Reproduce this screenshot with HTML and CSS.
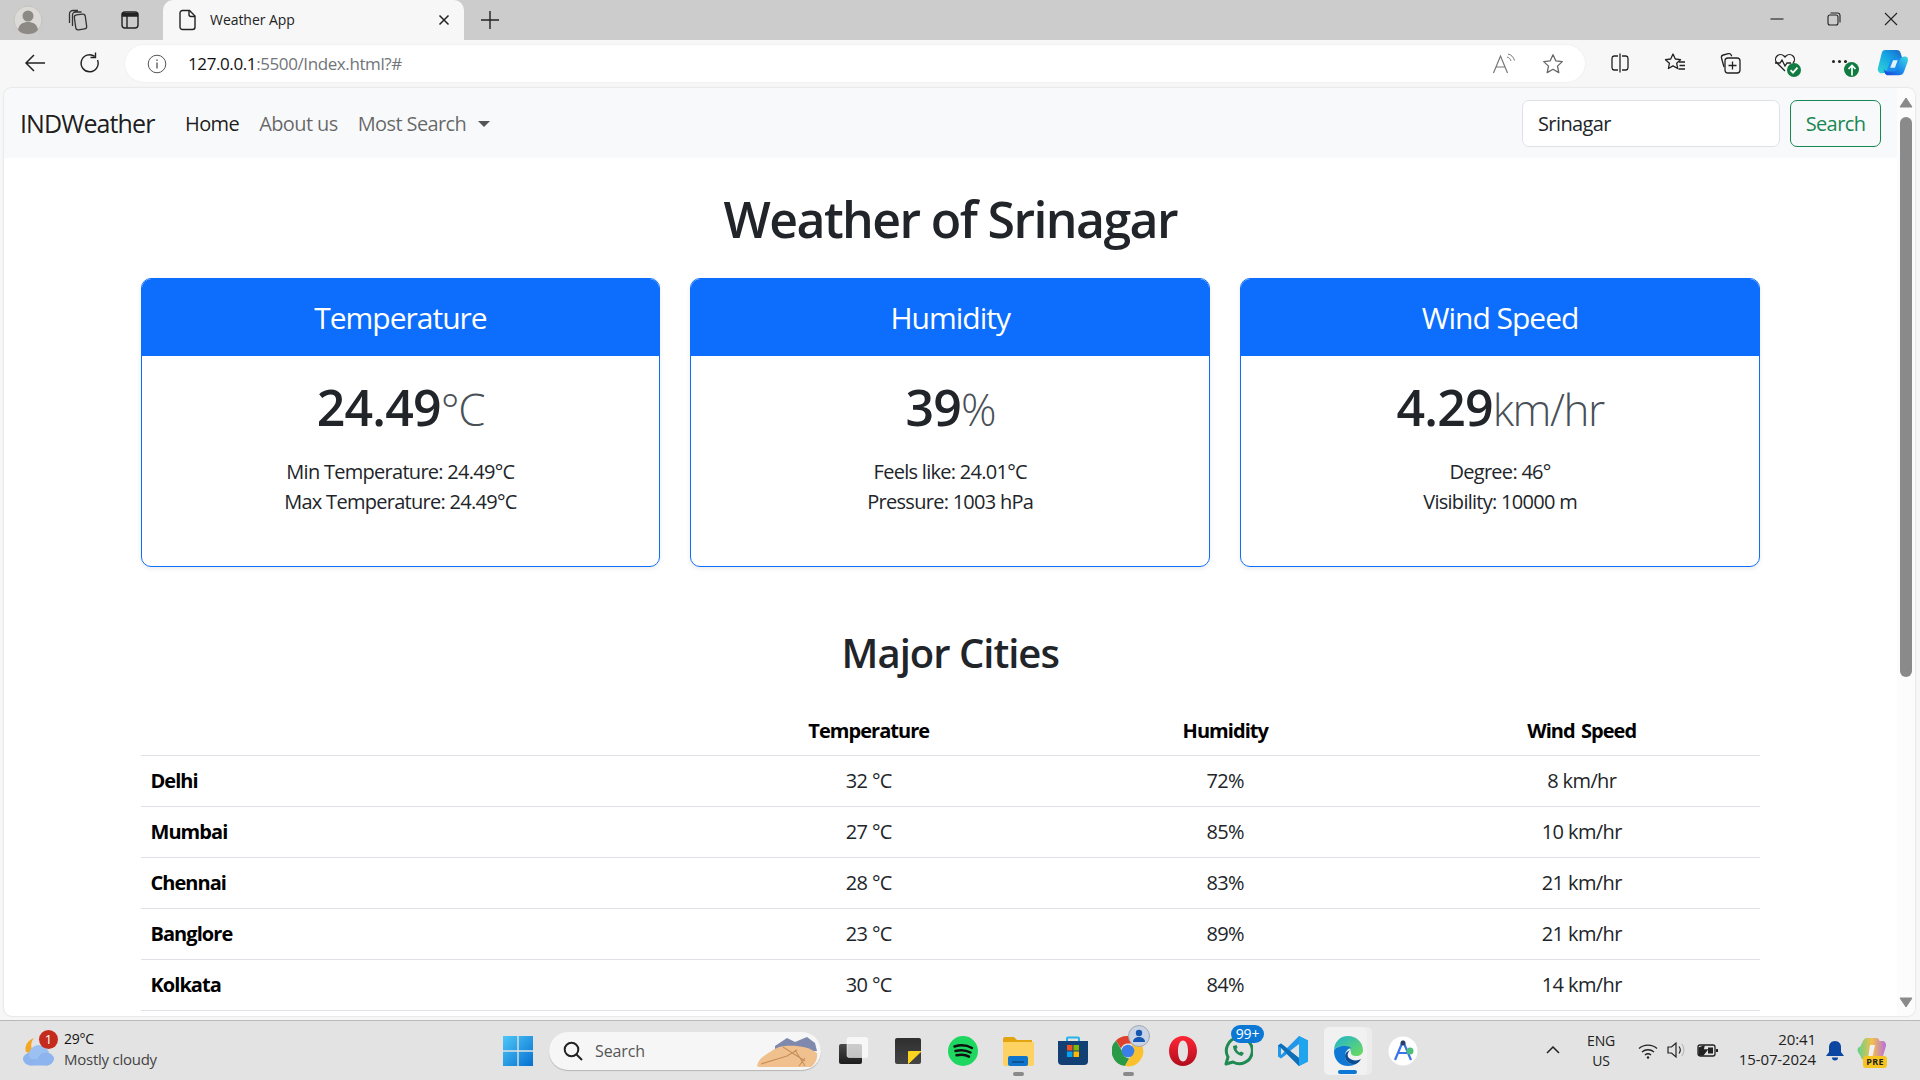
FILE: index.html
```html
<!DOCTYPE html>
<html lang="en">
<head>
<meta charset="utf-8">
<title>Weather App</title>
<link rel="stylesheet" href="styles.css">
</head>
<body>
<div class="tabstrip">
  <div class="slot profile-slot"><svg width="30" height="30" viewBox="0 0 30 30"><circle cx="15" cy="15" r="14" fill="#dcdad6" stroke="#c4c2be"/><circle cx="15" cy="11" r="5.5" fill="#8d8a85"/><path d="M5 25c1-6 5-8 10-8s9 2 10 8c-3 3-6 4-10 4s-7-1-10-4z" fill="#8d8a85"/></svg></div>
  <div class="slot coll-slot"><svg width="24" height="24" viewBox="0 0 24 24" fill="none" stroke="#333" stroke-width="1.3"><rect x="9" y="6.5" width="11" height="15" rx="2.5" transform="rotate(-8 14 14)"/><path d="M6.5 18V7a3 3 0 0 1 3-3h6M3.5 15V6a3.500 3.500 0 0 1 3.500-3.500h5"/></svg></div>
  <div class="slot vt-slot"><svg width="20" height="20" viewBox="0 0 20 20" fill="none" stroke="#222" stroke-width="1.4"><rect x="2" y="2" width="16" height="16" rx="3"/><path d="M2.500 3.500h15v2.500h-15z" fill="#222"/><path d="M7 6v12"/></svg></div>
  <div class="tab">
    <svg class="doc" width="18" height="22" viewBox="0 0 18 22" fill="none" stroke="#222" stroke-width="1.4"><path d="M3.500 1.500h7l5.500 5.500v11a2.500 2.500 0 0 1-2.500 2.500h-10a2.500 2.500 0 0 1-2.500-2.500v-14a2.500 2.500 0 0 1 2.500-2.500z"/><path d="M10 1.500v4a2 2 0 0 0 2 2h4"/></svg>
    <span class="tab-title">Weather App</span>
    <svg class="tab-x" width="12" height="12" viewBox="0 0 12 12" stroke="#222" stroke-width="1.500"><path d="M1.500 1.500l9 9M10.500 1.500l-9 9"/></svg>
  </div>
  <div class="slot plus-slot"><svg width="20" height="20" viewBox="0 0 20 20" stroke="#222" stroke-width="1.400"><path d="M10 1v18M1 10h18"/></svg></div>
  <div class="winctl">
    <div class="wslot"><svg width="14" height="14" viewBox="0 0 14 14" stroke="#222" stroke-width="1.100"><path d="M0.500 7h13"/></svg></div>
    <div class="wslot"><svg width="14" height="14" viewBox="0 0 14 14" fill="none" stroke="#222" stroke-width="1.100"><rect x="1" y="3" width="10" height="10" rx="2"/><path d="M3.500 1h7a2.500 2.500 0 0 1 2.500 2.500v7"/></svg></div>
    <div class="wslot"><svg width="14" height="14" viewBox="0 0 14 14" stroke="#222" stroke-width="1.100"><path d="M1 1l12 12M13 1l-12 12"/></svg></div>
  </div>
</div>

<div class="toolbar">
  <div class="slot back-slot"><svg width="22" height="20" viewBox="0 0 22 20" fill="none" stroke="#222" stroke-width="1.500"><path d="M21 10H2M10 2l-8 8 8 8"/></svg></div>
  <div class="slot reload-slot"><svg width="22" height="22" viewBox="0 0 22 22" fill="none" stroke="#222" stroke-width="1.400"><path d="M18.500 8a8.500 8.500 0 1 1-2.800-3.600"/><path d="M16.500 0.500v5h-5"/></svg></div>
  <div class="address">
    <svg class="info" width="20" height="20" viewBox="0 0 20 20" fill="none" stroke="#555" stroke-width="1"><circle cx="10" cy="10" r="8.800"/><path d="M10 8.500v6M10 5.500v1.400" stroke-width="1.300"/></svg>
    <span class="url"><span class="url-host">127.0.0.1</span>:5500/Index.html?#</span>
    <svg class="read" width="24" height="22" viewBox="0 0 24 22" fill="none" stroke="#777" stroke-width="1.200"><path d="M1.500 20L8.500 3l7 17M4 14h9"/><path d="M15 4c2 .5 3.500 2 4 4M16 1c3.500 1 5.500 3 6.500 6.500" stroke-width="1"/></svg>
    <svg class="star" width="22" height="22" viewBox="0 0 22 22" fill="none" stroke="#666" stroke-width="1.300" stroke-linejoin="round"><path d="M11 1.800l2.800 6 6.500.8-4.800 4.500 1.300 6.500-5.800-3.300-5.800 3.300 1.300-6.500-4.800-4.500 6.500-.8z"/></svg>
  </div>
  <div class="tools">
    <div class="tslot"><svg width="20" height="20" viewBox="0 0 20 20" fill="none" stroke="#222" stroke-width="1.300"><path d="M8 3H4a2.500 2.500 0 0 0-2 2.500v9A2.500 2.500 0 0 0 4 17h4M12 3h4a2.500 2.500 0 0 1 2 2.500v9a2.500 2.500 0 0 1-2 2.500h-4M10 .5v19"/></svg></div>
    <div class="tslot"><svg width="22" height="22" viewBox="0 0 22 22" fill="none" stroke="#222" stroke-width="1.300" stroke-linejoin="round"><path d="M9 2l2.300 5 5.200.7-3.800 3.600 1 5.200-4.700-2.600-4.600 2.600 1-5.200L1.500 7.700 6.700 7z"/><path d="M15 10h6M15.500 13.500h5.500M14.500 17h6.500"/></svg></div>
    <div class="tslot"><svg width="22" height="22" viewBox="0 0 22 22" fill="none" stroke="#222" stroke-width="1.300"><path d="M5 15l-2.500-9a2.500 2.500 0 0 1 1.800-3l5-1.300a2.500 2.500 0 0 1 3 1.500l.4 1"/><rect x="6" y="6" width="15" height="15" rx="3"/><path d="M13.500 9.500v8M9.500 13.500h8"/></svg></div>
    <div class="tslot tbadged"><svg width="22" height="22" viewBox="0 0 22 22" fill="none" stroke="#222" stroke-width="1.300"><path d="M11 19L3 11a5 5 0 0 1 0-7 5 5 0 0 1 7 0l1 1 1-1a5 5 0 0 1 7 0 5 5 0 0 1 0 7"/><path d="M1 11h5l2-3 3 6 2-3h4"/></svg><span class="ok-badge"><svg width="12" height="12" viewBox="0 0 12 12" fill="none" stroke="#fff" stroke-width="1.800"><path d="M2.500 6.200l2.500 2.500 4.500-5"/></svg></span></div>
    <div class="tslot tbadged"><span class="dots"></span><span class="up-badge"><svg width="10" height="12" viewBox="0 0 10 12" fill="none" stroke="#fff" stroke-width="1.700"><path d="M5 11.500V2M1.500 5L5 1.500 8.500 5"/></svg></span></div>
    <div class="tslot copilot-slot"><svg width="32" height="30" viewBox="0 0 34 32"><defs><linearGradient id="cpa" x1="0" y1="1" x2="1" y2="0"><stop offset="0" stop-color="#35d6d0"/><stop offset=".55" stop-color="#14a5e6"/><stop offset="1" stop-color="#1b60c8"/></linearGradient><linearGradient id="cpb" x1="0" y1="1" x2="1" y2="0"><stop offset="0" stop-color="#1742d8"/><stop offset=".5" stop-color="#1b8fec"/><stop offset="1" stop-color="#3fdbe0"/></linearGradient></defs><path d="M11 10h15l-5 16H7z" fill="#1b8fec"/><path d="M17 13h5l-3 8h-5z" fill="#dff3fb"/><path d="M9 2h12c2 0 3.500 1 4 3l3 9c-1-2-3-3-5-3h-5c-2 0-3.500 1-4.200 3l-3 9c-.8 2.500-2.800 4-5 4H5c-3 0-5-3-4-6l3.800-15C5.600 3 6.400 2 9 2z" fill="url(#cpa)"/><path d="M23 29H12c-2 0-3.500-1-4-3l-1-4c1 2 3 3 5 3h5c2 0 3.500-1 4.200-3l3-9c.8-2.500 2.800-4 5-4h.8c2.500 0 3.500 2.500 2.800 5l-4 11c-1 3-2.800 4-5.800 4z" fill="url(#cpb)"/></svg></div>
  </div>
</div>

<div class="viewport">
  <div class="page">
    <nav class="navbar">
      <span class="brand">INDWeather</span>
      <a class="nav-link active">Home</a>
      <a class="nav-link">About us</a>
      <a class="nav-link">Most Search<span class="caret"></span></a>
      <form class="search">
        <div class="search-input">Srinagar</div>
        <div class="search-btn">Search</div>
      </form>
    </nav>
    <main class="main">
      <h1 class="title">Weather of Srinagar</h1>
      <section class="cards">
        <article class="card">
          <h4 class="card-head">Temperature</h4>
          <div class="card-body">
            <div class="value">24.49<span class="unit">°C</span></div>
            <p class="detail">Min Temperature: 24.49°C</p>
            <p class="detail">Max Temperature: 24.49°C</p>
          </div>
        </article>
        <article class="card">
          <h4 class="card-head">Humidity</h4>
          <div class="card-body">
            <div class="value">39<span class="unit">%</span></div>
            <p class="detail">Feels like: 24.01°C</p>
            <p class="detail">Pressure: 1003 hPa</p>
          </div>
        </article>
        <article class="card">
          <h4 class="card-head">Wind Speed</h4>
          <div class="card-body">
            <div class="value">4.29<span class="unit">km/hr</span></div>
            <p class="detail">Degree: 46°</p>
            <p class="detail">Visibility: 10000 m</p>
          </div>
        </article>
      </section>
      <h2 class="subtitle">Major Cities</h2>
      <table class="cities">
        <thead>
          <tr><th class="first"></th><th>Temperature</th><th>Humidity</th><th>Wind Speed</th></tr>
        </thead>
        <tbody>
          <tr><th class="first">Delhi</th><td>32 °C</td><td>72%</td><td>8 km/hr</td></tr>
          <tr><th class="first">Mumbai</th><td>27 °C</td><td>85%</td><td>10 km/hr</td></tr>
          <tr><th class="first">Chennai</th><td>28 °C</td><td>83%</td><td>21 km/hr</td></tr>
          <tr><th class="first">Banglore</th><td>23 °C</td><td>89%</td><td>21 km/hr</td></tr>
          <tr><th class="first">Kolkata</th><td>30 °C</td><td>84%</td><td>14 km/hr</td></tr>
        </tbody>
      </table>
    </main>
  </div>
  <div class="scrollbar">
    <svg class="arrow-up" width="14" height="11" viewBox="0 0 14 11"><path d="M7 1l6 9H1z" fill="#8a8a8a" stroke="#8a8a8a" stroke-linejoin="round"/></svg>
    <span class="thumb"></span>
    <svg class="arrow-down" width="14" height="11" viewBox="0 0 14 11"><path d="M7 10l6-9H1z" fill="#8a8a8a" stroke="#8a8a8a" stroke-linejoin="round"/></svg>
  </div>
</div>

<footer class="taskbar">
  <div class="weather">
    <div class="weather-icon">
      <svg width="34" height="36" viewBox="0 0 34 36"><path d="M12 6a11 11 0 0 0 3 17L4 20C2 14 6 8 12 6z" fill="#f5a623"/><ellipse cx="9" cy="27" rx="8" ry="6.500" fill="#8db4ee"/><ellipse cx="17" cy="22" rx="10" ry="9" fill="#9cc0f2"/><ellipse cx="24" cy="27" rx="8" ry="6.500" fill="#8db4ee"/><rect x="6" y="27" width="22" height="6.500" rx="3" fill="#8db4ee"/></svg>
      <span class="alert">1</span>
    </div>
    <div class="weather-text"><span class="temp">29°C</span><span class="cond">Mostly cloudy</span></div>
  </div>
  <div class="center-icons">
    <div class="ticon win"><svg width="30" height="30" viewBox="0 0 30 30"><defs><linearGradient id="wn" x1="0" y1="0" x2="1" y2="1"><stop offset="0" stop-color="#4fc7f8"/><stop offset="1" stop-color="#0570d0"/></linearGradient></defs><path d="M0 0h14.300v14.300H0zM15.700 0H30v14.300H15.700zM0 15.700h14.300V30H0zM15.700 15.700H30V30H15.700z" fill="url(#wn)"/></svg></div>
    <div class="searchbox">
      <svg width="22" height="22" viewBox="0 0 22 22" fill="none" stroke="#222" stroke-width="2"><circle cx="9.500" cy="9.500" r="6.800"/><path d="M14.500 14.500l5.500 5.500"/></svg>
      <span class="search-label">Search</span>
      <svg class="search-art" width="64" height="32" viewBox="0 0 64 32"><path d="M20 10l12-8 8 4 12-5 8 6 2 8-42 3z" fill="#7f88ad"/><path d="M2 30C3 22 14 16 24 11c12-3 30-1 38 6 1 6-2 11-6 14H8c-3 0-5-0-6-1z" fill="#f0c18f"/><path d="M6 28l26-8 10-6M28 11l22 14M40 14l10 16M50 22l-6 8" stroke="#c68e57" stroke-width="1.100" fill="none"/></svg>
    </div>
    <div class="ticon"><svg width="30" height="28" viewBox="0 0 30 28"><defs><linearGradient id="tvd" x1="0" y1="0" x2="0" y2="1"><stop offset="0" stop-color="#4a4a4a"/><stop offset="1" stop-color="#1c1c1c"/></linearGradient></defs><rect x="1" y="7" width="23" height="20" rx="2" fill="url(#tvd)"/><rect x="9" y="0.500" width="21" height="20" rx="2" fill="#fff" fill-opacity=".72" stroke="#fff" stroke-opacity=".5"/></svg></div>
    <div class="ticon"><svg width="26" height="26" viewBox="0 0 26 26"><defs><linearGradient id="stk" x1="0" y1="0" x2="0" y2="1"><stop offset="0" stop-color="#2f2f2f"/><stop offset="1" stop-color="#444"/></linearGradient></defs><rect x="0" y="0" width="26" height="26" rx="2" fill="url(#stk)"/><path d="M13.500 13.500h12.500L13.500 25.500z" fill="#fad41e" stroke="#fad41e" stroke-linejoin="round"/></svg></div>
    <div class="ticon"><svg width="30" height="30" viewBox="0 0 30 30" fill="none"><circle cx="15" cy="15" r="15" fill="#1ed760"/><path d="M6.500 10.500c6-1.800 12.500-1.300 17.500 1.500M7.500 15c5-1.400 10.500-1 15 1.500M8.500 19.300c4.500-1.100 9-.8 12.500 1.300" stroke="#111" stroke-width="2.500" stroke-linecap="round"/></svg></div>
    <div class="ticon dotted"><svg width="32" height="30" viewBox="0 0 32 30"><path d="M1 3a2 2 0 0 1 2-2h9l3 3h15v24H1z" fill="#e2a50f"/><path d="M1 6h30a1 1 0 0 1 1 1v21a2 2 0 0 1-2 2H3a2 2 0 0 1-2-2z" fill="#fdd263"/><rect x="6" y="20" width="20" height="10" rx="2" fill="#0f75cc"/><path d="M10 26h12" stroke="#074a86" stroke-width="1.500"/></svg></div>
    <div class="ticon"><svg width="30" height="30" viewBox="0 0 30 30"><path d="M9 5V2.500a1 1 0 0 1 1-1h10a1 1 0 0 1 1 1V5" fill="none" stroke="#28b4ea" stroke-width="2"/><path d="M0 5h30v20a4 4 0 0 1-4 4H4a4 4 0 0 1-4-4z" fill="#123f74"/><rect x="9" y="9" width="5.500" height="5.500" fill="#f25022"/><rect x="15.500" y="9" width="5.500" height="5.500" fill="#7fba00"/><rect x="9" y="15.500" width="5.500" height="5.500" fill="#00a4ef"/><rect x="15.500" y="15.500" width="5.500" height="5.500" fill="#ffb900"/></svg></div>
    <div class="ticon dotted chrome"><svg width="32" height="32" viewBox="0 0 32 32"><path d="M16 1a15 15 0 0 1 13 7.500H16a7.500 7.500 0 0 0-7 5L4 5.500A15 15 0 0 1 16 1z" fill="#e0412f"/><path d="M4 5.500l6.500 11.300a7.500 7.500 0 0 0 6.700 6.600L13 31A15 15 0 0 1 4 5.500z" fill="#2b9a47"/><path d="M29 8.500A15 15 0 0 1 13 31l6.500-11.300a7.500 7.500 0 0 0-1-11.200z" fill="#fbc02d"/><circle cx="16" cy="16" r="6.300" fill="#3b7ee8"/></svg><span class="chrome-user"><svg width="14" height="14" viewBox="0 0 14 14" fill="#1557b0"><circle cx="7" cy="4" r="3.200"/><path d="M1 13c0-3.500 3-5 6-5s6 1.500 6 5z"/></svg></span></div>
    <div class="ticon"><svg width="28" height="30" viewBox="0 0 28 30"><defs><linearGradient id="op" x1="0" y1="0" x2="0" y2="1"><stop offset="0" stop-color="#ff2636"/><stop offset="1" stop-color="#b00d1e"/></linearGradient></defs><path d="M14 0c8 0 14 6.500 14 15s-6 15-14 15S0 23.500 0 15 6 0 14 0zm0 4.500c-3.200 0-5 4.600-5 10.500s1.800 10.500 5 10.500 5-4.600 5-10.500-1.800-10.500-5-10.500z" fill="url(#op)" fill-rule="evenodd"/></svg></div>
    <div class="ticon"><svg width="30" height="32" viewBox="0 0 30 32"><path d="M3 29l2-7a13 13 0 1 1 5 5z" fill="none" stroke="#1f8a52" stroke-width="3" stroke-linejoin="round"/><path d="M10 11c0 5 4 9 9 10l2-3-3-1.500-1.500 1c-1.500-.7-2.500-2-3-3.500l1-1.500L13.500 10z" fill="#1f8a52"/></svg><span class="count">99+</span></div>
    <div class="ticon"><svg width="30" height="30" viewBox="0 0 30 30"><path d="M21 0l9 4.500v21L21 30 9 18l-6 4.500-3-2V9.500l3-2L9 12z" fill="#2296e8"/><path d="M21 0l9 4.500v21L21 30z" fill="#1fa4ee"/><path d="M21 8l-9 7 9 7z" fill="#e3e3e3"/><path d="M3 11l4 4-4 4z" fill="#e3e3e3"/><path d="M0 9.500l3-2L21 22v8L3 12z" fill="#0e6fb8"/></svg></div>
    <div class="ticon active-app"><span class="app-tile"></span><svg class="edge" width="30" height="30" viewBox="0 0 30 30"><defs><linearGradient id="eg" x1="0" y1="0" x2="1" y2="1"><stop offset="0" stop-color="#1fb3cf"/><stop offset="1" stop-color="#6fdc5b"/></linearGradient></defs><path d="M1 15C1 6 7 0 15 0c9 0 15 7 15 14 0 4-3 6-7 6-3 0-5-1-5-3 0-4-2-7-7-7-5 0-9 2-10 5z" fill="url(#eg)"/><path d="M1 15c0 9 6 15 14 15 3 0 6-1 8-2-5 1-11-2-11-8 0-4 2-7 6-8-2-2-5-2-7-2-5 0-9 2-10 5z" fill="#0f77d4"/><path d="M12 20c0 6 6 9 11 8 2-1 4-3 5-5-3 2-9 2-12-1-2-2-2-6 2-8-4 1-6 3-6 6z" fill="#0b4d94"/></svg><span class="app-bar"></span></div>
    <div class="ticon"><svg width="30" height="30" viewBox="0 0 30 30"><circle cx="15" cy="15" r="14.500" fill="#fff"/><path d="M15 5l-8 19M15 5l8 19M9 17h12" stroke="#3a76e8" stroke-width="2.200" fill="none"/><circle cx="15" cy="7" r="2.500" fill="#2a3f63"/><circle cx="22" cy="15" r="3.500" fill="#4cc07a"/></svg></div>
  </div>
  <div class="tray">
    <svg class="chev" width="14" height="8" viewBox="0 0 14 8" fill="none" stroke="#222" stroke-width="1.500"><path d="M1 7l6-6 6 6"/></svg>
    <div class="lang"><span>ENG</span><span>US</span></div>
    <svg class="wifi" width="20" height="16" viewBox="0 0 20 16" fill="none" stroke="#222" stroke-width="1.300"><path d="M1 5.500c5-4.500 13-4.500 18 0M4 9c3.500-3 8.500-3 12 0M7 12c1.800-1.500 4.200-1.500 6 0"/><circle cx="10" cy="14.500" r="1.200" fill="#222" stroke="none"/></svg>
    <svg class="vol" width="20" height="18" viewBox="0 0 20 18" fill="none" stroke="#222" stroke-width="1.200"><path d="M1 6h3.500L9 2v14l-4.500-4H1z"/><path d="M12 5.500c1.500 2 1.500 5 0 7"/><path d="M15 3c2.500 3.500 2.500 8.500 0 12" stroke="#bbb"/></svg>
    <svg class="batt" width="22" height="16" viewBox="0 0 22 16" fill="none" stroke="#222" stroke-width="1.300"><rect x="1" y="3" width="17" height="11" rx="2"/><path d="M2 13V6l5-2-1 4 4 0-4 5z" fill="#222"/><rect x="11" y="5.500" width="5" height="6" fill="#222" stroke="none"/><path d="M20 7v3" stroke-width="2"/></svg>
    <div class="clock"><span>20:41</span><span>15-07-2024</span></div>
    <svg class="bell" width="18" height="20" viewBox="0 0 18 20" fill="#0b47a1"><path d="M9 0c4 0 6 3 6 6v5l3 4H0l3-4V6c0-3 2-6 6-6z"/><path d="M6 16.500h6a3 3 0 0 1-6 0z"/></svg>
    <div class="copilot-pre"><svg width="30" height="24" viewBox="0 0 30 24"><defs><linearGradient id="cpc" x1="0" y1="0" x2="1" y2="0"><stop offset="0" stop-color="#5fd28a"/><stop offset=".5" stop-color="#f3c04c"/><stop offset="1" stop-color="#b76fe0"/></linearGradient></defs><path d="M10 1h9c2 0 3 1 3.500 3h3c2 0 4 2 3.500 5l-3 10c-1 3-2 4-5 4H8c-3 0-4-2-4-3L1 15c-1-3 0-5 2-5l3-6c1-2 2-3 4-3z" fill="url(#cpc)"/><path d="M13 8h5l-3 14h-4z" fill="#f0f0f0"/></svg><span class="pre">PRE</span></div>
  </div>
</footer>
</body>
</html>
```

FILE: styles.css
```css
* { box-sizing: border-box; }
html, body { margin: 0; height: 100%; }
body {
  width: 1920px;
  height: 1080px;
  overflow: hidden;
  display: flex;
  flex-direction: column;
  font-family: "Open Sans", "Noto Sans", sans-serif;
  color: #212529;
  background: #f7f7f7;
}
svg { display: block; flex: none; }

/* tab strip */
.tabstrip { height: 40px; background: #cccccc; display: flex; align-items: center; flex: none; }
.slot { width: 40px; height: 40px; display: flex; align-items: center; justify-content: center; flex: none; }
.profile-slot { margin-left: 8px; }
.coll-slot { margin-left: 10px; }
.vt-slot { margin-left: 12px; }
.tab {
  margin-left: 13px;
  width: 301px;
  height: 40px;
  background: #f7f7f7;
  border-radius: 10px 10px 0 0;
  display: flex;
  align-items: center;
  padding: 0 14px 0 16px;
}
.tab-title { margin-left: 13px; margin-top: -2px; font-size: 14px; letter-spacing: -0.05px; color: #222; flex: 1; }
.plus-slot { margin-left: 6px; }
.winctl { margin-left: auto; display: flex; padding-right: 1px; }
.wslot { width: 57px; height: 40px; display: flex; align-items: center; justify-content: center; padding-bottom: 2px; }

/* toolbar */
.toolbar { height: 48px; flex: none; display: flex; align-items: center; background: #f7f7f7; padding-left: 15px; }
.back-slot { margin-top: -2px; }
.reload-slot { margin-left: 15px; margin-top: -2px; }
.address {
  margin-left: 15px;
  width: 1460px;
  height: 37px;
  margin-top: -1px;
  background: #fff;
  border-radius: 19px;
  display: flex;
  align-items: center;
  padding: 0 21px 0 22px;
  box-shadow: 0 0 2px rgba(0,0,0,.08);
}
.url { margin-left: 21px; font-size: 17px; letter-spacing: -0.4px; color: #70757a; flex: 1; }
.url-host { color: #111; }
.read { margin-right: 26px; }
.tools { display: flex; margin-left: 7px; margin-top: -2px; }
.tslot { width: 55px; height: 40px; display: flex; align-items: center; justify-content: center; position: relative; }
.copilot-slot { width: 52px; }
.ok-badge {
  position: absolute; left: 30px; top: 20px; width: 14px; height: 14px; border-radius: 50%;
  background: #107c41; display: flex; align-items: center; justify-content: center;
}
.up-badge {
  position: absolute; left: 32px; top: 19px; width: 15px; height: 15px; border-radius: 50%;
  background: #107c41; display: flex; align-items: center; justify-content: center;
}
.dots { width: 3px; height: 3px; border-radius: 50%; background: #222; box-shadow: 6px 0 0 #222, 12px 0 0 #222; margin-left: -12px; margin-top: -4px; }

/* viewport */
.viewport {
  flex: none;
  height: 928px;
  width: 1911px;
  margin-left: 4px;
  background: #fff;
  border-radius: 8px;
  display: flex;
  overflow: hidden;
  box-shadow: 0 0 2px rgba(0,0,0,.2);
}
.page { width: 1893px; flex: none; overflow: hidden; }
.scrollbar { width: 18px; flex: none; background: #fcfcfc; position: relative; display: flex; flex-direction: column; align-items: center; padding-top: 9px; }
.thumb { width: 12px; height: 560px; margin-top: 9px; border-radius: 6px; background: #8a8a8a; }
.arrow-down { position: absolute; bottom: 8px; left: 2px; }

/* navbar */
.navbar { height: 70px; background: #f8f9fa; display: flex; align-items: center; padding: 0 16px 0 16px; }
.brand { font-size: 25px; color: rgba(0,0,0,.9); width: 135px; margin-right: 20px; letter-spacing: -0.9px; white-space: nowrap; }
.nav-link { font-size: 20px; padding: 0 10px; color: rgba(0,0,0,.6); letter-spacing: -0.6px; display: flex; align-items: center; }
.nav-link.active { color: rgba(0,0,0,.9); }
.caret { margin-left: 12px; margin-top: 1px; width: 0; height: 0; border-left: 6px solid transparent; border-right: 6px solid transparent; border-top: 6px solid #555; }
.search { margin-left: auto; display: flex; gap: 10px; }
.search-input {
  width: 258px; height: 47px; background: #fff; border: 1px solid #dee2e6; border-radius: 7px;
  padding: 0 15px 0 15px; font-size: 20px; letter-spacing: -0.6px; display: flex; align-items: center;
}
.search-btn {
  width: 91px; height: 47px; border: 1px solid #198754; border-radius: 7px; color: #198754;
  font-size: 20px; letter-spacing: -0.6px; display: flex; align-items: center; justify-content: center;
}

/* main */
.main { padding: 32px 137px 0 136.5px; }
.title { margin: 0 0 28px; font-size: 50px; line-height: 59px; font-weight: 600; text-align: center; letter-spacing: -1.6px; padding-bottom: 1px; }
.cards { display: grid; grid-template-columns: repeat(3, 1fr); gap: 30px; }
.card { border: 1px solid #0d6efd; border-radius: 10px; overflow: hidden; box-shadow: 0 2px 5px rgba(0,0,0,.08); text-align: center; }
.card-head { margin: 0; height: 77px; background: #0d6efd; color: #fff; font-size: 30px; line-height: 77px; font-weight: 400; letter-spacing: -1px; }
.card-body { padding: 20px 20px 49px; }
.value { font-size: 50px; line-height: 62px; font-weight: 600; margin-bottom: 17px; letter-spacing: -0.8px; }
.unit { font-weight: 300; color: #495057; font-size: 44px; letter-spacing: -1.5px; }
.detail { margin: 0; font-size: 20px; line-height: 30px; letter-spacing: -0.72px; }
.subtitle { margin: 62px 0 29px; font-size: 40px; line-height: 48px; font-weight: 600; text-align: center; letter-spacing: -1px; }
.cities { width: 100%; border-collapse: collapse; table-layout: fixed; font-size: 20px; letter-spacing: -0.6px; }
.cities th, .cities td { height: 51px; padding: 10px; text-align: center; border-bottom: 1px solid #dee2e6; line-height: 30px; font-weight: 400; }
.cities th { font-weight: 700; color: #000; letter-spacing: -0.95px; word-spacing: 2px; }
.cities thead th { height: 49px; padding-bottom: 8px; }
.cities td { color: #212529; }
.cities .first { width: 550px; text-align: left; }

/* taskbar */
.taskbar {
  flex: none;
  height: 60px;
  margin-top: 4px;
  background: #e3e3e3;
  border-top: 1px solid #b9b9b9;
  display: flex;
  align-items: center;
  font-size: 15px;
  position: relative;
}
.weather { display: flex; align-items: center; padding-left: 22px; width: 518px; flex: none; margin-right: -15px; }
.weather-icon { position: relative; width: 34px; height: 36px; margin-top: -2px; }
.alert {
  position: absolute; left: 17px; top: -2px; width: 19px; height: 19px; border-radius: 50%;
  background: #c42b1c; color: #fff; font-size: 13px; display: flex; align-items: center; justify-content: center;
}
.weather-text { margin-left: 8px; margin-top: -3px; display: flex; flex-direction: column; line-height: 20px; font-size: 15px; letter-spacing: -0.25px; }
.temp { color: #111; font-size: 14px; }
.cond { color: #444; }
.center-icons { display: flex; align-items: center; }
.ticon { width: 55px; height: 48px; display: flex; align-items: center; justify-content: center; position: relative; flex: none; }
.win { width: 30px; }
.searchbox {
  margin-left: 16px; width: 272px; height: 38px; background: #f6f6f6; border-radius: 19px;
  box-shadow: 0 1px 1px rgba(0,0,0,.2); display: flex; align-items: center; padding-left: 13px; position: relative; margin-right: 4px;
}
.search-label { margin-left: 11px; color: #555; font-size: 16px; letter-spacing: -0.1px; }
.search-art { position: absolute; right: 2px; top: 4px; }
.dotted::after { content: ""; position: absolute; bottom: -1px; left: 50%; margin-left: -5px; width: 11px; height: 4px; border-radius: 2px; background: #8a8a8a; }
.chrome-user {
  position: absolute; right: 5px; top: -2px; width: 22px; height: 22px; border-radius: 50%;
  background: #c9d3e6; border: 1px solid #a4a8ae; display: flex; align-items: center; justify-content: center;
}
.count {
  position: absolute; left: 21px; top: -2px; width: 33px; height: 18px; border-radius: 9px;
  background: #0a78d4; color: #fff; font-size: 14px; letter-spacing: -.2px; text-align: center; line-height: 18px;
}
.active-app { height: 48px; }
.app-tile {
  position: absolute; left: 4px; top: 0; width: 43px; height: 48px; background: #f1f1f1; border-radius: 5px;
  box-shadow: 5px 0 0 #ececec;
}
.edge { position: relative; }
.app-bar { position: absolute; left: 18px; bottom: 1px; width: 19px; height: 4px; border-radius: 2px; background: #0a78d4; }
.tray { position: absolute; top: 0; right: 0; height: 59px; width: 380px; }
.tray > * { position: absolute; }
.chev { left: 6px; top: 25px; }
.lang { left: 40px; top: 10px; width: 42px; display: flex; flex-direction: column; align-items: center; line-height: 20px; font-size: 14px; color: #222; letter-spacing: -.2px; }
.wifi { left: 98px; top: 22px; }
.vol { left: 127px; top: 20px; }
.batt { left: 157px; top: 21px; }
.clock { right: 104px; top: 8px; display: flex; flex-direction: column; align-items: flex-end; line-height: 20px; font-size: 15px; color: #222; letter-spacing: -.1px; }
.bell { left: 286px; top: 20px; }
.copilot-pre { left: 317px; top: 16px; width: 32px; height: 32px; }
.pre {
  position: absolute; left: 6px; top: 19px; width: 24px; height: 12px; border-radius: 3px; background: #f6c521; color: #222;
  font-size: 9px; font-weight: 700; line-height: 12px; text-align: center; letter-spacing: .3px;
}
```
